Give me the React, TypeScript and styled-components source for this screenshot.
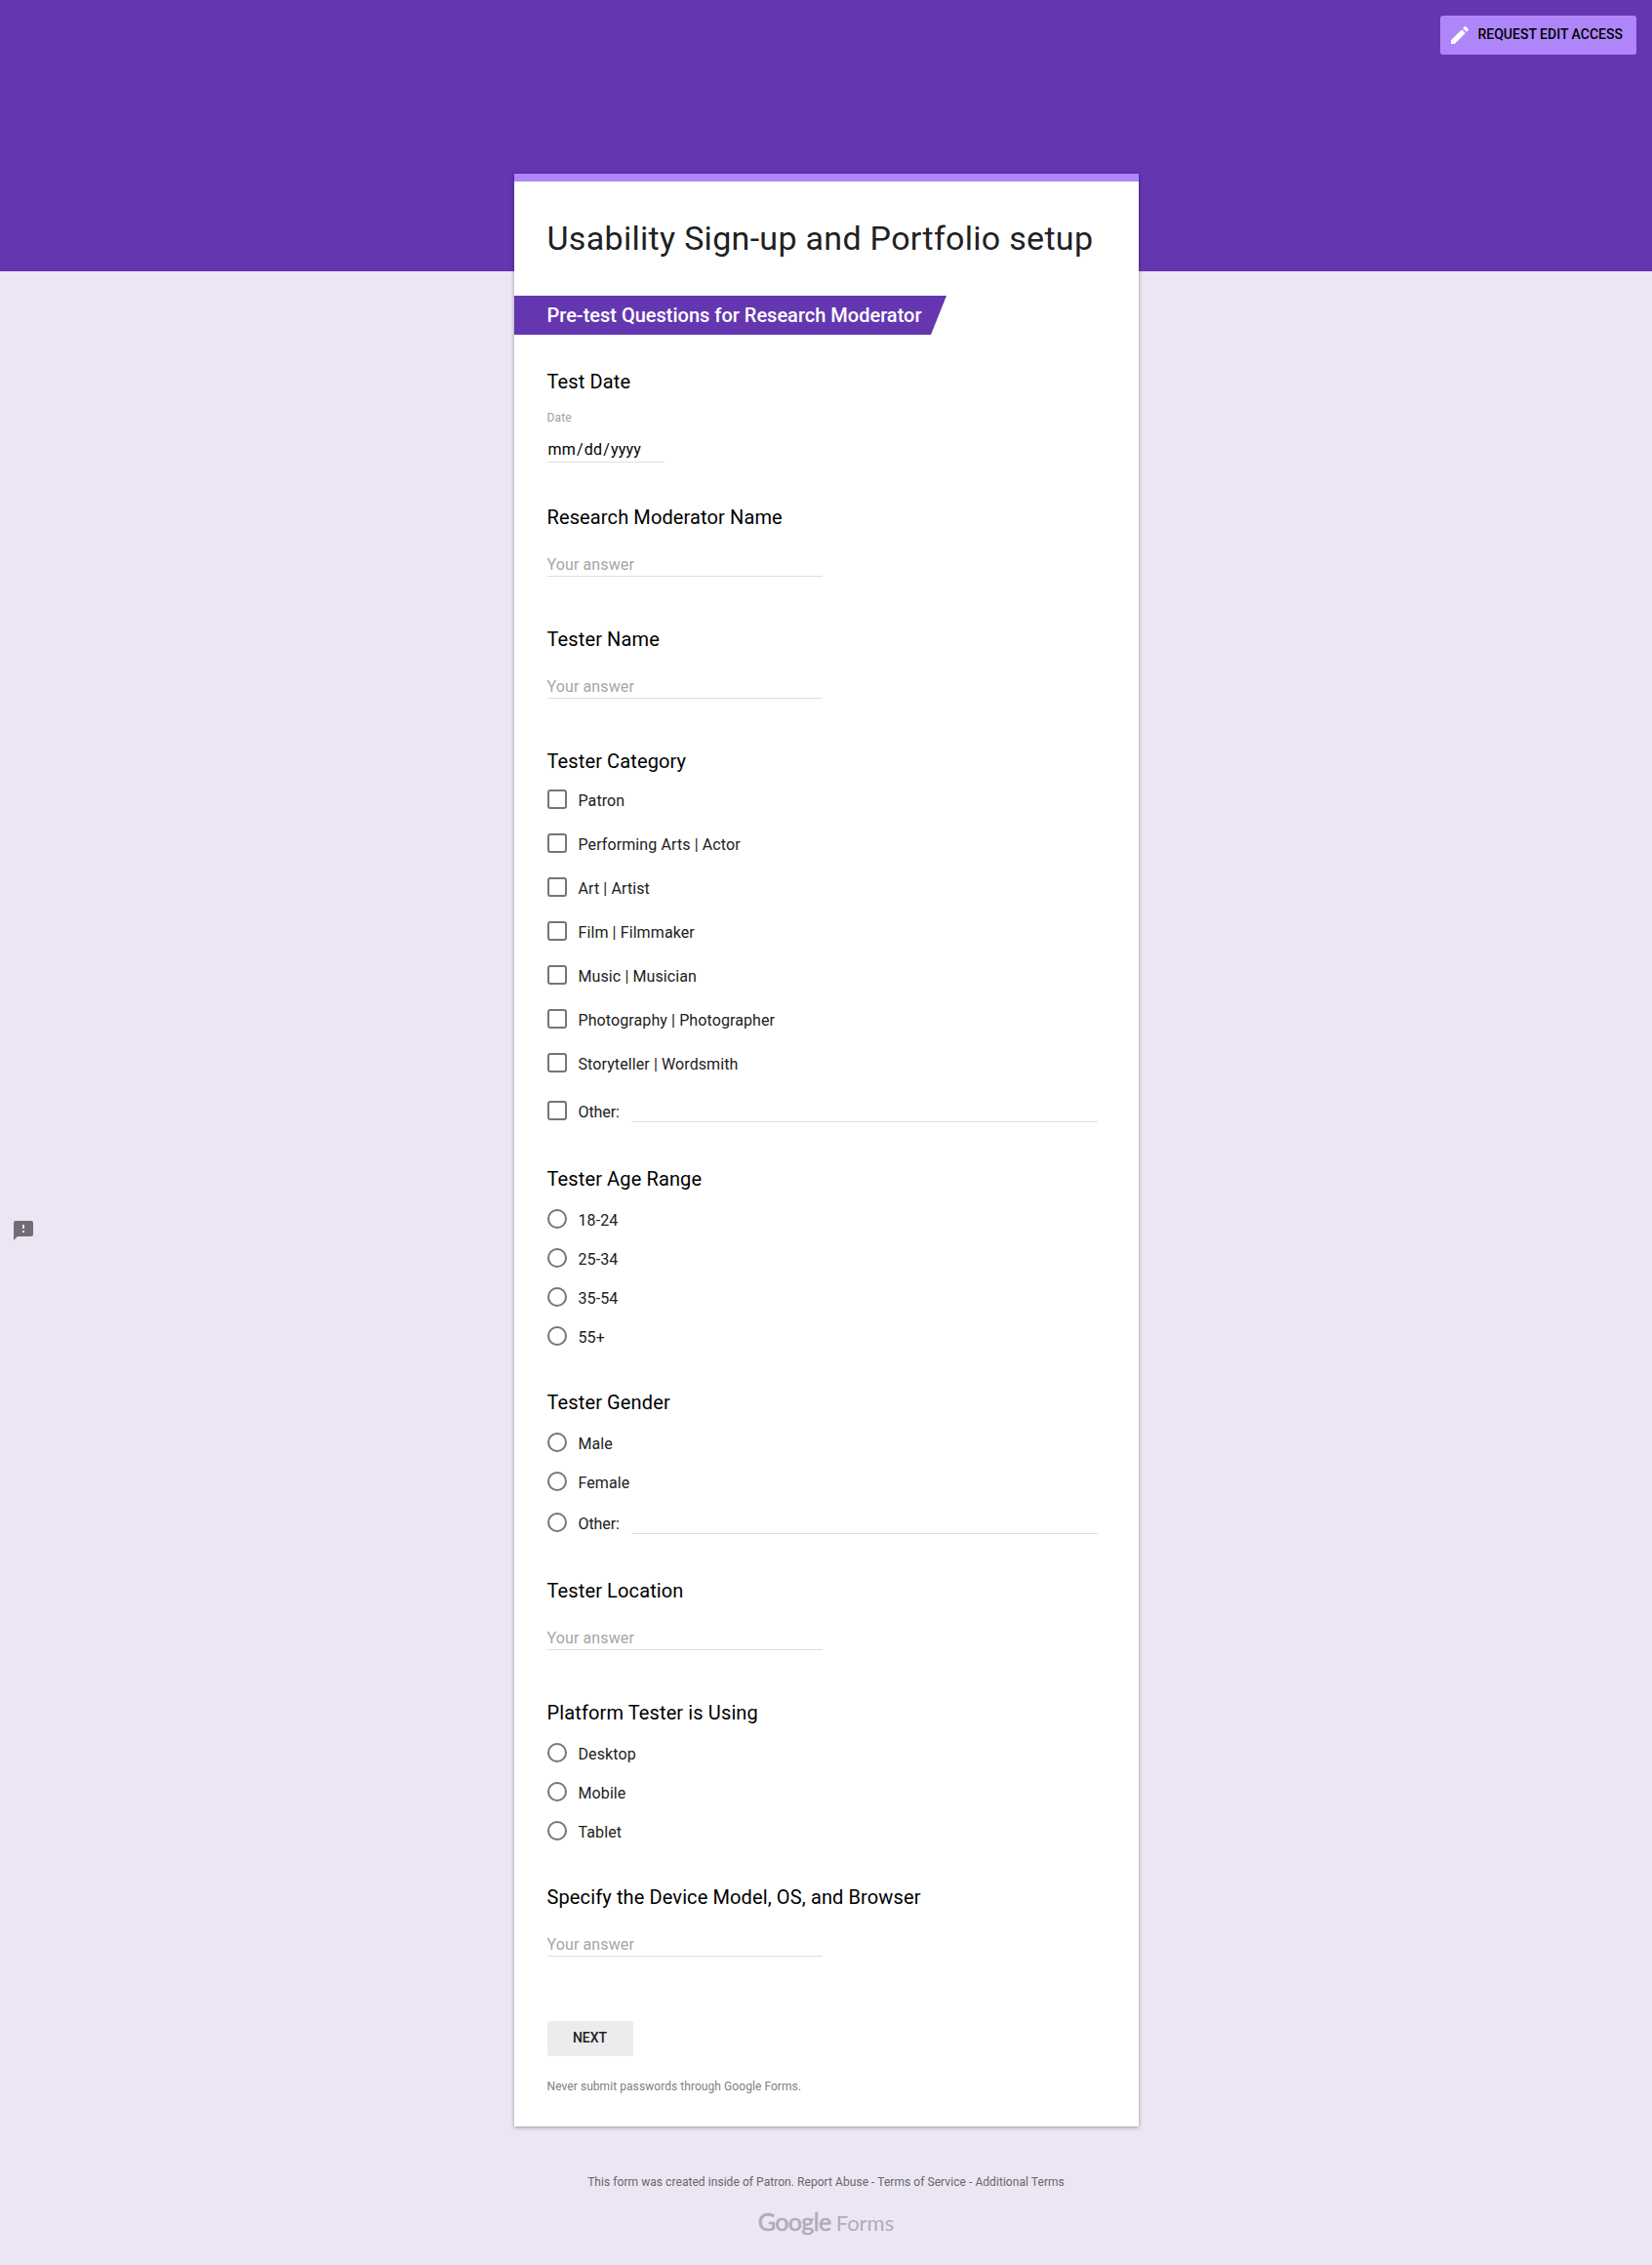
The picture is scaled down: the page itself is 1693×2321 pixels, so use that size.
import React from "react";
import styled, { createGlobalStyle } from "styled-components";
import { MdEdit, MdFeedback } from "react-icons/md";

const GlobalStyle = createGlobalStyle`
  *, *::before, *::after { box-sizing: border-box; }
  body {
    margin: 0;
    background: #ece6f4;
    font-family: Roboto, "Liberation Sans", sans-serif;
    color: #212121;
  }
`;

const Page = styled.div`
  min-height: 2321px;
  background: linear-gradient(#6437b0, #6437b0) 0 0 / 100% 278px no-repeat #ece6f4;
`;

const TopBar = styled.header`
  display: flex;
  justify-content: flex-end;
  height: 178px;
  padding: 16px 16px 0 0;
`;

const EditButton = styled.button`
  display: flex;
  align-items: center;
  gap: 6.5px;
  width: 201px;
  height: 40px;
  padding: 0 8px;
  border: 0;
  border-radius: 3px;
  background: #ae86fa;
  color: #000;
  font: 500 14px/20px Roboto, sans-serif;
  white-space: nowrap;
  svg { color: #fff; flex: none; }
`;

const EditLabel = styled.span`
  padding-bottom: 2px;
`;

const Card = styled.main`
  width: 640px;
  height: 2001px;
  margin: 0 auto;
  border-top: 8px solid #ae86fa;
  background: #fff;
  box-shadow: 0 1px 4px 0 rgba(0, 0, 0, 0.37);
`;

const Title = styled.h1`
  margin: 0;
  padding: 38px 34px 0;
  height: 117px;
  font-size: 34px;
  font-weight: 400;
  letter-spacing: 0.3px;
  line-height: 40px;
  white-space: nowrap;
`;

const SectionBanner = styled.h2`
  margin: 0 0 36px;
  width: 443.5px;
  height: 40px;
  padding-left: 34px;
  background: #6437b0;
  clip-path: polygon(0 0, 100% 0, calc(100% - 16px) 100%, 0 100%);
  color: #fff;
  font-size: 20px;
  font-weight: 500;
  line-height: 40px;
  white-space: nowrap;
`;

const Questions = styled.form`
  padding: 0 41.5px 0 34px;
`;

const Item = styled.section<{ $gapAfter: number }>`
  margin-bottom: ${(p) => p.$gapAfter}px;
`;

const Question = styled.h3`
  margin: 0;
  color: #000;
  font-size: 20px;
  font-weight: 400;
  letter-spacing: 0.12px;
  line-height: 24px;
  white-space: nowrap;
`;

const AnswerLine = styled.div`
  width: 282px;
  height: 25px;
  margin-top: 24px;
  padding-top: 1px;
  border-bottom: 1px solid #dedede;
  color: #a6a6a6;
  font-size: 16px;
  letter-spacing: 0.12px;
  line-height: 24px;
`;

const DateLabel = styled.div`
  margin: 17px 0 13px;
  color: #a0a0a0;
  font-size: 12px;
  letter-spacing: 0.15px;
  line-height: 16px;
`;

const DateField = styled.div`
  display: flex;
  width: 120px;
  height: 25px;
  border-bottom: 1px solid #dedede;
  color: #000;
  font-size: 16px;
  letter-spacing: 0.18px;
  line-height: 24px;
`;

const DatePart = styled.span`
  padding: 0 1px;
`;

const Options = styled.div<{ $top: number; $gap: number }>`
  display: flex;
  flex-direction: column;
  gap: ${(p) => p.$gap}px;
  padding-top: ${(p) => p.$top}px;
`;

const OptionRow = styled.label<{ $extra?: number }>`
  display: flex;
  height: 20px;
  margin-top: ${(p) => p.$extra ?? 0}px;
  font-size: 16px;
  letter-spacing: ${(p) => (p.$extra ? "-0.08px" : "0.1px")};
  line-height: 24px;
`;

const Mark = styled.span<{ $round?: boolean }>`
  flex: none;
  width: 20px;
  height: 20px;
  margin-right: 12px;
  border: 2px solid #757575;
  border-radius: ${(p) => (p.$round ? "50%" : "3px")};
`;

const OtherLine = styled.span`
  flex: none;
  width: 478px;
  height: 22px;
  margin-left: auto;
  border-bottom: 1px solid #dedede;
`;

const Actions = styled.div`
  padding: 14px 34px 0;
`;

const NextButton = styled.button`
  display: block;
  width: 88px;
  height: 36px;
  padding: 0 0 2px;
  border: 0;
  border-radius: 3px;
  background: #ececec;
  color: #212121;
  font: 500 14px/34px Roboto, sans-serif;
`;

const Warning = styled.p`
  margin: 23px 0 0;
  color: #808080;
  font-size: 12px;
  letter-spacing: 0.065px;
  line-height: 16px;
`;

const Footer = styled.footer`
  display: flex;
  flex-direction: column;
  align-items: center;
  padding-top: 49px;
`;

const Legal = styled.p`
  margin: 0;
  color: #666;
  font-size: 12px;
  letter-spacing: 0.058px;
  line-height: 16px;
  white-space: nowrap;
`;

const Brand = styled.div`
  display: flex;
  align-items: baseline;
  gap: 5px;
  margin-top: 16px;
  color: #b1abb9;
  font-family: Lato, sans-serif;
  line-height: 32px;
`;

const Google = styled.span`
  font-size: 25px;
  font-weight: 400;
  letter-spacing: -0.6px;
  -webkit-text-stroke: 0.6px #b1abb9;
`;

const Forms = styled.span`
  font-size: 22px;
  font-weight: 400;
`;

const Feedback = styled.button`
  position: fixed;
  left: 12px;
  top: 1249px;
  width: 24px;
  height: 24px;
  padding: 0;
  border: 0;
  background: none;
  color: #706d75;
  svg { display: block; }
`;

const TextItem = ({ title }: { title: string }) => (
  <Item $gapAfter={52}>
    <Question>{title}</Question>
    <AnswerLine>Your answer</AnswerLine>
  </Item>
);

type ChoiceProps = {
  title: string;
  options: string[];
  other?: boolean;
  round?: boolean;
};

const ChoiceItem = ({ title, options, other, round }: ChoiceProps) => (
  <Item $gapAfter={other ? 48 : 46}>
    <Question>{title}</Question>
    <Options $top={round ? 19 : 17} $gap={round ? 20 : 25}>
      {options.map((option) => (
        <OptionRow key={option}>
          <Mark $round={round} />
          {option}
        </OptionRow>
      ))}
      {other && (
        <OptionRow $extra={round ? 2 : 4}>
          <Mark $round={round} />
          Other:
          <OtherLine />
        </OptionRow>
      )}
    </Options>
  </Item>
);

export default function App() {
  return (
    <Page>
      <GlobalStyle />
      <TopBar>
        <EditButton>
          <MdEdit size={24} />
          <EditLabel>REQUEST EDIT ACCESS</EditLabel>
        </EditButton>
      </TopBar>
      <Card>
        <Title>Usability Sign-up and Portfolio setup</Title>
        <SectionBanner>Pre-test Questions for Research Moderator</SectionBanner>
        <Questions>
          <Item $gapAfter={44}>
            <Question>Test Date</Question>
            <DateLabel>Date</DateLabel>
            <DateField>
              <DatePart>mm</DatePart>/<DatePart>dd</DatePart>/<DatePart>yyyy</DatePart>
            </DateField>
          </Item>
          <TextItem title="Research Moderator Name" />
          <TextItem title="Tester Name" />
          <ChoiceItem
            title="Tester Category"
            options={[
              "Patron",
              "Performing Arts | Actor",
              "Art | Artist",
              "Film | Filmmaker",
              "Music | Musician",
              "Photography | Photographer",
              "Storyteller | Wordsmith",
            ]}
            other
          />
          <ChoiceItem round title="Tester Age Range" options={["18-24", "25-34", "35-54", "55+"]} />
          <ChoiceItem round title="Tester Gender" options={["Male", "Female"]} other />
          <TextItem title="Tester Location" />
          <ChoiceItem
            round
            title="Platform Tester is Using"
            options={["Desktop", "Mobile", "Tablet"]}
          />
          <TextItem title="Specify the Device Model, OS, and Browser" />
        </Questions>
        <Actions>
          <NextButton>NEXT</NextButton>
          <Warning>Never submit passwords through Google Forms.</Warning>
        </Actions>
      </Card>
      <Footer>
        <Legal>
          This form was created inside of Patron. Report Abuse - Terms of Service - Additional Terms
        </Legal>
        <Brand>
          <Google>Google</Google>
          <Forms>Forms</Forms>
        </Brand>
      </Footer>
      <Feedback aria-label="Report a problem">
        <MdFeedback size={24} />
      </Feedback>
    </Page>
  );
}
